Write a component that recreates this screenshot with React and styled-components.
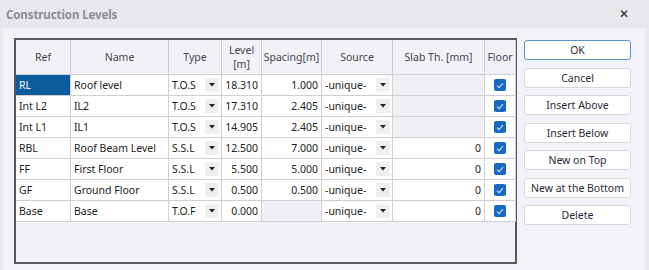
import React from 'react';
import styled, { createGlobalStyle, css } from 'styled-components';

const GlobalStyle = createGlobalStyle`
    html, body {
        margin: 0;
        padding: 0;
        background: #e8e8ec;
    }
    body {
        font-family: "Noto Sans", "Open Sans", sans-serif;
        font-size: 10.5px;
        color: #222;
    }
`;

const columns = [
    { key: 'ref', label: 'Ref', width: 55 },
    { key: 'name', label: 'Name', width: 98 },
    { key: 'type', label: 'Type', width: 53 },
    { key: 'level', label: ['Level', '[m]'], width: 40 },
    { key: 'spacing', label: 'Spacing[m]', width: 60 },
    { key: 'source', label: 'Source', width: 71 },
    { key: 'slab', label: 'Slab Th. [mm]', width: 92 },
    { key: 'floor', label: 'Floor', width: 31 },
];

const rows = [
    { ref: 'RL', name: 'Roof level', type: 'T.O.S', level: '18.310', spacing: '1.000', slab: null },
    { ref: 'Int L2', name: 'IL2', type: 'T.O.S', level: '17.310', spacing: '2.405', slab: null },
    { ref: 'Int L1', name: 'IL1', type: 'T.O.S', level: '14.905', spacing: '2.405', slab: null },
    { ref: 'RBL', name: 'Roof Beam Level', type: 'S.S.L', level: '12.500', spacing: '7.000', slab: '0' },
    { ref: 'FF', name: 'First Floor', type: 'S.S.L', level: '5.500', spacing: '5.000', slab: '0' },
    { ref: 'GF', name: 'Ground Floor', type: 'S.S.L', level: '0.500', spacing: '0.500', slab: '0' },
    { ref: 'Base', name: 'Base', type: 'T.O.F', level: '0.000', spacing: null, slab: '0' },
];

const buttons = ['OK', 'Cancel', 'Insert Above', 'Insert Below', 'New on Top', 'New at the Bottom', 'Delete'];

const template = columns.map(c => `${c.width}px`).join(' ');

const Caret = () => (
    <svg width="6" height="4" viewBox="0 0 6 4">
        <path d="M0 0 L6 0 L3 3.5 Z" fill="#222" />
    </svg>
);

const Check = () => (
    <svg width="8" height="7" viewBox="0 0 8 7">
        <path d="M1 3.6 L3.1 5.6 L7 1.2" stroke="#cfe2f7" strokeWidth="1.1" fill="none" />
    </svg>
);

const App = () => {
    return (
        <>
            <GlobalStyle />
            <Dialog>
                <TitleBar>
                    <Title>Construction Levels</Title>
                    <Close>✕</Close>
                </TitleBar>
                <Body>
                    <Grid>
                        <Row header>
                            {columns.map(c => (
                                <HeadCell key={c.key}>
                                    {Array.isArray(c.label) ? c.label.map(l => <span key={l}>{l}</span>) : c.label}
                                </HeadCell>
                            ))}
                        </Row>
                        {rows.map((r, i) => (
                            <Row key={r.ref}>
                                <Cell selected={i === 0}>{r.ref}</Cell>
                                <Cell>{r.name}</Cell>
                                <Cell>
                                    {r.type}
                                    <DropButton><Caret /></DropButton>
                                </Cell>
                                <Cell align="right">{r.level}</Cell>
                                <Cell align="right" disabled={!r.spacing}>{r.spacing}</Cell>
                                <Cell>
                                    -unique-
                                    <DropButton><Caret /></DropButton>
                                </Cell>
                                <Cell align="right" disabled={!r.slab}>{r.slab}</Cell>
                                <Cell align="center">
                                    <Checkbox><Check /></Checkbox>
                                </Cell>
                            </Row>
                        ))}
                    </Grid>
                    <Buttons>
                        {buttons.map((b, i) => (
                            <Button key={b} primary={i === 0}>{b}</Button>
                        ))}
                    </Buttons>
                </Body>
            </Dialog>
        </>
    );
}

export default App;

const Dialog = styled.div`
    width: 649px;
    height: 270px;
    display: flex;
    flex-direction: column;
    background: #e8e8ec;
    overflow: hidden;
`;

const TitleBar = styled.div`
    height: 28px;
    display: flex;
    align-items: center;
    justify-content: space-between;
    padding: 0 20px 0 6px;
    flex-shrink: 0;
`;

const Title = styled.div`
    font-family: "Noto Sans", sans-serif;
    font-weight: bold;
    font-size: 11.5px;
    color: #8c8c90;
    letter-spacing: -0.1px;
`;

const Close = styled.div`
    font-family: "DejaVu Sans", sans-serif;
    font-size: 12px;
    font-weight: bold;
    color: #222;
`;

const Body = styled.div`
    flex: 1;
    margin-left: 3px;
    margin-right: 4px;
    background: #f3f2f7;
    display: flex;
    align-items: flex-start;
    gap: 7px;
    padding: 10px 0 0 11px;
`;

const Grid = styled.div`
    width: 499px;
    height: 222px;
    border: 2px solid #58585c;
    background: #f2f1f7;
    display: flex;
    flex-direction: column;
`;

const Row = styled.div`
    display: grid;
    grid-template-columns: ${template};
    height: 21px;

    ${props => props.header && css`
        height: 35px;
    `}
`;

const HeadCell = styled.div`
    display: flex;
    flex-direction: column;
    align-items: center;
    justify-content: center;
    line-height: 14px;
    color: #454550;
    border-right: 1px solid #cfcfd4;
    border-bottom: 1px solid #cfcfd4;
    background: #f2f1f7;
    white-space: nowrap;
`;

const Cell = styled.div`
    position: relative;
    display: flex;
    align-items: center;
    padding: 0 3px;
    background: #fff;
    color: #222;
    border-right: 1px solid #cfcfd4;
    border-bottom: 1px solid #cfcfd4;
    white-space: nowrap;
    overflow: hidden;

    ${props => props.align === 'right' && css`
        justify-content: flex-end;
    `}

    ${props => props.align === 'center' && css`
        justify-content: center;
    `}

    ${props => props.disabled && css`
        background: #f0eff4;
    `}

    ${props => props.selected && css`
        background: #0b5c9c;
        color: #fff;
    `}
`;

const DropButton = styled.div`
    position: absolute;
    right: 2px;
    top: 3px;
    width: 14px;
    height: 14px;
    display: flex;
    align-items: center;
    justify-content: center;
    background: #efefef;
`;

const Checkbox = styled.div`
    width: 12px;
    height: 12px;
    border-radius: 2px;
    background: #1668c4;
    display: flex;
    align-items: center;
    justify-content: center;
`;

const Buttons = styled.div`
    display: flex;
    flex-direction: column;
    gap: 7.5px;
    padding-top: 2px;
`;

const Button = styled.button`
    width: 107px;
    height: 20px;
    padding: 0;
    font-family: "Noto Sans", sans-serif;
    font-size: 10.5px;
    color: #2a2a35;
    background: #fff;
    border: 1px solid #d6d6dc;
    border-radius: 3px;

    ${props => props.primary && css`
        border-color: #5b95d6;
    `}
`;
